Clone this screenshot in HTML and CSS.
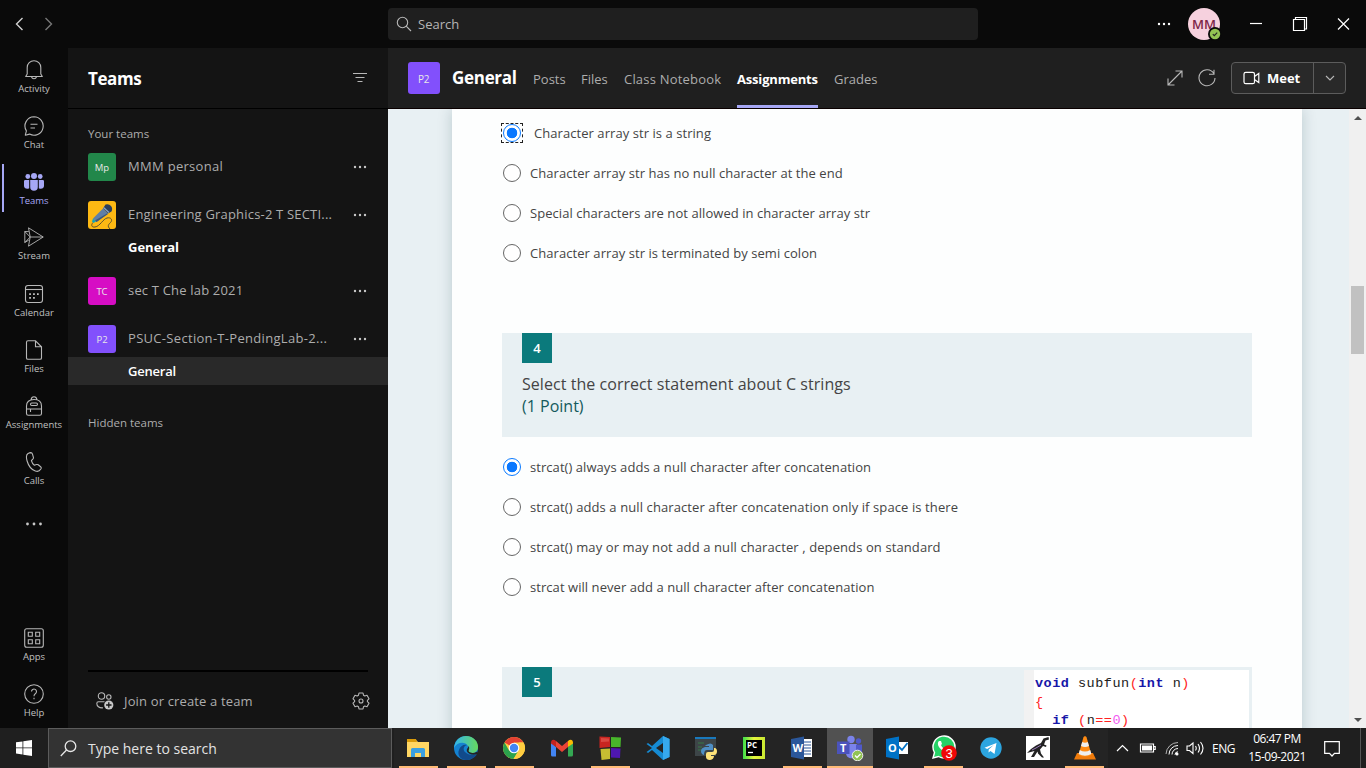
FILE: index.html
```html
<!DOCTYPE html>
<html lang="en">
<head>
<meta charset="utf-8">
<title>Microsoft Teams</title>
<link rel="stylesheet" href="styles.css">
</head>
<body>
<div class="desktop">
  <header class="titlebar">
    <div class="history">
      <svg class="ic" width="48" height="16" viewBox="0 0 48 16"><path d="M7.500 2 1.500 8l6 6" stroke="#d0d0d0" stroke-width="1.400"/><path d="m30.500 2 6 6-6 6" stroke="#777" stroke-width="1.400"/></svg>
    </div>
    <div class="searchbox">
      <svg class="ic" width="16" height="16" viewBox="0 0 16 16"><circle cx="6.500" cy="6.500" r="5.200"/><path d="m10.200 10.200 4.800 4.800"/></svg>
      <span class="t-search">Search</span>
    </div>
    <div class="window-tools">
      <svg class="dots white" width="14" height="4" viewBox="0 0 14 4"><circle cx="2" cy="2" r="1.200"/><circle cx="7" cy="2" r="1.200"/><circle cx="12" cy="2" r="1.200"/></svg>
      <div class="avatar"><span>MM</span>
        <svg class="presence" width="14" height="14" viewBox="0 0 14 14"><circle cx="7" cy="7" r="7" fill="#0a0a0a"/><circle cx="7" cy="7" r="5.200" fill="#92c353"/><path d="m4.800 7.200 1.500 1.500 2.900-3" fill="none" stroke="#222" stroke-width="1.100"/></svg>
      </div>
      <svg class="winbtns" width="102" height="16" viewBox="0 0 102 16" fill="none" stroke="#fff" stroke-width="1.200"><path d="M1 7.500h12"/><path d="M44.500 3.500h11v11h-11zM46.500 3.500v-2H57.500v11.500h-2"/><path d="m89 2.500 11 11m0-11-11 11"/></svg>
    </div>
  </header>

  <main class="workspace">
    <nav class="rail">
      <div class="rail-item"><svg class="ic" width="20" height="20" viewBox="0 0 20 20"><path d="M3.200 14V7.500a6.800 6.800 0 0 1 13.600 0V14l1.500 2.500H1.700z" stroke-linejoin="round"/><path d="M7.500 16.800a2.600 2.600 0 0 0 5 0"/></svg><span>Activity</span></div>
      <div class="rail-item"><svg class="ic" width="20" height="20" viewBox="0 0 20 20"><path d="M10 .8a9.200 9.200 0 1 1-4.400 17.300l-4.300 1.100 1.100-4.300A9.200 9.200 0 0 1 10 .8z" stroke-linejoin="round"/><path d="M6.500 8.200h7M6.500 12h4.500"/></svg><span>Chat</span></div>
      <div class="rail-item active"><svg width="20" height="20" viewBox="0 0 20 20" fill="#a6a7f5"><circle cx="10" cy="4" r="3"/><circle cx="3.800" cy="4.500" r="2.400"/><circle cx="16.200" cy="4.500" r="2.400"/><path d="M6.200 8h7.600v7a3.800 3.800 0 0 1-7.600 0zM0 9.200Q0 8 1.200 8h4v8.300C2.500 17.800 0 16 0 14zM20 9.200Q20 8 18.800 8h-4v8.300c2.700 1.500 5.200-.3 5.200-2.300z"/></svg><span>Teams</span></div>
      <div class="rail-item stream"><svg class="ic" width="20" height="20" viewBox="0 0 20 20"><path d="M4.500.8 19.200 10 4.500 19.200 6.200 10z M4.800 4.600.8 4.500v11l4-2.400M6.200 10h13M.8 4.500 6.200 10 .8 15.500" stroke-linejoin="round" stroke-width=".9"/></svg><span>Stream</span></div>
      <div class="rail-item"><svg class="ic" width="20" height="20" viewBox="0 0 20 20"><rect x="1.500" y="1.500" width="17" height="17" rx="2.500"/><path d="M1.500 5.500h17"/><g fill="#c8c8c8" stroke="none"><path d="M5.200 9.200h1.700v1.700H5.200zM9.100 9.200h1.700v1.700H9.100zM13 9.200h1.700v1.700H13zM5.200 13h1.700v1.700H5.200zM9.100 13h1.700v1.700H9.100z"/></g></svg><span>Calendar</span></div>
      <div class="rail-item"><svg class="ic" width="20" height="20" viewBox="0 0 20 20"><path d="M4 .8h7.500l6 6V18q0 1.300-1.500 1.300H4q-1.500 0-1.500-1.300V2.300Q2.500.8 4 .8zM11.500.8v6h6"/></svg><span>Files</span></div>
      <div class="rail-item"><svg class="ic" width="20" height="20" viewBox="0 0 20 20"><path d="M2.500 10C2.500 6 5 3.500 10 3.500S17.500 6 17.500 10v7.500q0 1.800-1.800 1.800H4.300q-1.800 0-1.800-1.800zM7 3.800Q7.500.8 10 .8t3 3M2.500 13h15M6.500 13v3"/><rect x="6.500" y="7" width="7" height="2.500" rx="1.200"/></svg><span>Assignments</span></div>
      <div class="rail-item"><svg class="ic" width="20" height="20" viewBox="0 0 20 20"><path d="M5.300.9 4 1.500C2.500 2.400 2.100 5.500 3.100 9c1.300 4.500 4.500 8.700 8.200 10 2.400.8 4.300.1 5.500-2l.3-.6q.4-1-.5-1.700l-2.400-1.900q-.8-.6-1.800-.2l-2 .7c-1.600-1.200-2.500-2.800-3-4.700l1.600-1.700q.6-.7.4-1.600l-.9-3.100Q8 .7 6.800.6z" stroke-linejoin="round"/></svg><span>Calls</span></div>
      <div class="rail-item more"><svg class="dots" width="18" height="4" viewBox="0 0 18 4"><circle cx="2.500" cy="2" r="1.400"/><circle cx="9" cy="2" r="1.400"/><circle cx="15.500" cy="2" r="1.400"/></svg></div>
      <div class="rail-bottom">
        <div class="rail-item"><svg class="ic" width="20" height="20" viewBox="0 0 20 20"><rect x=".7" y=".7" width="18.600" height="18.600" rx="2"/><path d="M4.300 4.300h4v4h-4zM11.700 4.300h4v4h-4zM4.300 11.700h4v4h-4zM11.700 11.700h4v4h-4z"/></svg><span>Apps</span></div>
        <div class="rail-item"><svg class="ic" width="20" height="20" viewBox="0 0 20 20"><circle cx="10" cy="10" r="9.300"/><path d="M7.500 7.600a2.500 2.500 0 1 1 3.800 2.100Q10 10.500 10 12.200M10 13.800v1.400"/></svg><span>Help</span></div>
      </div>
    </nav>

    <aside class="teams-panel">
      <div class="panel-head"><h1>Teams</h1>
        <svg class="ic" width="16" height="12" viewBox="0 0 16 12"><path d="M1 1.500h14M3.500 5.500h9M5.500 9.500h5"/></svg></div>
      <div class="panel-body">
        <div class="section-label">Your teams</div>
        <div class="team"><span class="tile green">Mp</span><span class="team-name n1">MMM personal</span><svg class="dots" width="14" height="4" viewBox="0 0 14 4"><circle cx="2" cy="2" r="1.200"/><circle cx="7" cy="2" r="1.200"/><circle cx="12" cy="2" r="1.200"/></svg></div>
        <div class="team"><svg class="tile-art" width="28" height="28" viewBox="0 0 28 28"><rect width="28" height="28" rx="3" fill="#fdb913"/><path d="M5 21.500c-2.500 3-1 5 2 4.500 5-.7 8-8 12-9 4-1 6 2 3.500 4.500-2 2-3.500 3.500-.5 6.500" fill="none" stroke="#5b5230" stroke-width="1"/><path d="m15 7.500 5 5L8.500 21 5 17.500z" fill="#5f7fa6"/><path d="m19 12.500 1 .5L8.500 21 7 19.500z" fill="#3c5878"/><path d="m5 17.500 3 3L5.500 22 4 20.500z" fill="#12a3b8"/><path d="M17.500 3.500q3.500-1 5.500 1.500t.5 5.500L20 12.500l-5-5z" fill="#2c3f5a"/><path d="m15.500 6.500 5.500 5" stroke="#86a5c9" stroke-width="1.300"/></svg><span class="team-name n2">Engineering Graphics-2 T SECTI...</span><svg class="dots" width="14" height="4" viewBox="0 0 14 4"><circle cx="2" cy="2" r="1.200"/><circle cx="7" cy="2" r="1.200"/><circle cx="12" cy="2" r="1.200"/></svg></div>
        <div class="channel unread"><span>General</span></div>
        <div class="team"><span class="tile pink">TC</span><span class="team-name n3">sec T Che lab 2021</span><svg class="dots" width="14" height="4" viewBox="0 0 14 4"><circle cx="2" cy="2" r="1.200"/><circle cx="7" cy="2" r="1.200"/><circle cx="12" cy="2" r="1.200"/></svg></div>
        <div class="team"><span class="tile purple">P2</span><span class="team-name n4">PSUC-Section-T-PendingLab-2...</span><svg class="dots" width="14" height="4" viewBox="0 0 14 4"><circle cx="2" cy="2" r="1.200"/><circle cx="7" cy="2" r="1.200"/><circle cx="12" cy="2" r="1.200"/></svg></div>
        <div class="channel selected"><span>General</span></div>
        <div class="section-label hidden-label">Hidden teams</div>
      </div>
      <div class="panel-foot">
        <svg class="ic" width="18" height="18" viewBox="0 0 18 18"><circle cx="5.500" cy="4" r="3.200"/><circle cx="12.800" cy="5" r="2.200"/><path d="M7 15.800C3 16.200.8 14 .8 11.500q0-1.700 1.700-1.700h6"/><circle cx="12.800" cy="13" r="4.600" fill="#c8c8c8" stroke="none"/><path d="M12.800 10.300v5.400M10.100 13h5.400" stroke="#141414" stroke-width="1.300"/></svg>
        <span class="t-join">Join or create a team</span>
        <svg class="ic gear" width="18" height="18" viewBox="0 0 18 18"><path d="m7 1-.5 2.200-1.300.8-2.200-.7-2 3.500L2.600 8.300v1.400L1 11.200l2 3.500 2.200-.7 1.300.8L7 17h4l.5-2.200 1.300-.8 2.200.7 2-3.500-1.600-1.500V8.300L17 6.800l-2-3.500-2.200.7-1.300-.8L11 1z" stroke-linejoin="round"/><circle cx="9" cy="9" r="2"/></svg>
      </div>
    </aside>

    <section class="channel-view">
      <div class="channel-head">
        <span class="tile purple big">P2</span>
        <h2>General</h2>
        <div class="tabs"><span class="tab tb1">Posts</span><span class="tab tb2">Files</span><span class="tab tb3">Class Notebook</span><span class="tab tb4 current">Assignments</span><span class="tab tb5">Grades</span></div>
        <div class="head-actions">
          <svg class="ic" width="16" height="16" viewBox="0 0 16 16"><path d="M1 15 15 1M8.500 1H15v6.500M1 8.500V15h6.500"/></svg>
          <svg class="ic" width="18" height="18" viewBox="0 0 18 18"><path d="M15.800 4.500A8 8 0 1 0 17 9M16 .8v4.500h-5"/></svg>
          <div class="meet"><span class="meet-main"><svg width="18" height="14" viewBox="0 0 18 14" fill="none" stroke="#fff" stroke-width="1.200"><rect x="1" y="1.300" width="10.500" height="11.400" rx="1.800"/><path d="m11.800 5.200 4-2.800v9.200l-4-2.800"/></svg><b>Meet</b></span><span class="meet-drop"><svg class="ic" width="10" height="6" viewBox="0 0 10 6"><path d="m1 1 4 4 4-4"/></svg></span></div>
        </div>
      </div>
      <div class="form-area">
        <div class="form-canvas">
          <div class="form-card">
            <div class="options first">
              <div class="option focused"><i class="radio on"></i><span class="o1">Character array str is a string</span></div>
              <div class="option"><i class="radio"></i><span class="o2">Character array str has no null character at the end</span></div>
              <div class="option"><i class="radio"></i><span class="o3">Special characters are not allowed in character array str</span></div>
              <div class="option"><i class="radio"></i><span class="o4">Character array str is terminated by semi colon</span></div>
            </div>
            <div class="question"><span class="qnum">4</span>
              <p class="qtext">Select the correct statement about C strings</p><p class="points">(1 Point)</p></div>
            <div class="options">
              <div class="option"><i class="radio on"></i><span class="o5">strcat() always adds a null character after concatenation</span></div>
              <div class="option"><i class="radio"></i><span class="o6">strcat() adds a null character after concatenation only if space is there</span></div>
              <div class="option"><i class="radio"></i><span class="o7">strcat() may or may not add a null character , depends on standard</span></div>
              <div class="option"><i class="radio"></i><span class="o8">strcat will never add a null character after concatenation</span></div>
            </div>
            <div class="question last"><span class="qnum">5</span>
              <pre class="code"><b>void</b> subfun<em>(</em><b>int</b> n<em>)</em>
<em>{</em>
  <b>if</b> <em>(</em>n<em>==</em><u>0</u><em>)</em></pre></div>
          </div>
        </div>
        <div class="scrollbar"><i class="arrow up"></i><i class="thumb"></i><i class="arrow down"></i></div>
      </div>
    </section>
  </main>

  <footer class="taskbar">
    <div class="start"><svg width="16" height="16" viewBox="0 0 16 16" fill="#fff"><path d="M0 2.300 6.500 1.400v6.100H0zM7.300 1.300 16 0v7.500H7.300zM0 8.300h6.500v6.200L0 13.600zM7.300 8.300H16V16l-8.700-1.300z"/></svg></div>
    <div class="winsearch"><svg width="17" height="17" viewBox="0 0 17 17" fill="none" stroke="#e6e6e6" stroke-width="1.300"><circle cx="10.500" cy="6.200" r="5.300"/><path d="M6.500 10 .8 16"/></svg><span class="t-type">Type here to search</span></div>
    <div class="apps">
      <div class="app run"><svg width="24" height="24" viewBox="0 0 24 24"><path d="M1 4h9l2 2h11v15H1z" fill="#ffd663"/><path d="M1 3h9l1 3H1z" fill="#d99b0b"/><path d="M5 21v-7.500Q5 12 6.500 12h11q1.500 0 1.500 1.500V21h-4v-4H9v4z" fill="#3a9fe0"/></svg></div>
      <div class="app run"><svg width="26" height="26" viewBox="0 0 26 26"><defs><linearGradient id="eg" x1="0" x2="1"><stop offset="0" stop-color="#32b5ee"/><stop offset="1" stop-color="#67d85c"/></linearGradient></defs><circle cx="13" cy="13" r="12" fill="#1482d0"/><path d="M24 19c-2 4-7 6-11 6-6 0-9-6-7-10 1-4 5-6 8-5-4 1-4 5-2 7 3 3 8 4 12 2z" fill="#114a8b"/><path d="M1 13C2 5 7 1 13 1c8 0 12 6 12 11 0 4-3 6-6 6s-5-1-4-3c1-1 1-3 0-4-3-5-11-4-14 2z" fill="url(#eg)"/><path d="M15.500 11q1.500 2 .2 4.300-.7 2.200 3.800 2.700 2.500 0 4-1.200l1.500 1.700q-5 2.500-9 0-3-2-2-4.500 1-1 1.500-3z" fill="#242424"/></svg></div>
      <div class="app run"><svg width="24" height="24" viewBox="0 0 24 24"><circle cx="12" cy="12" r="11" fill="#ffcd40"/><path d="M12 12 2.500 6.500A11 11 0 0 1 21.500 6.500H12z" fill="#e34133"/><path d="M12 12 7.200 14.700 2.500 6.500a11 11 0 0 0 9 16.500l5-8.500z" fill="#2ba24c"/><path d="M11.500 23 16.800 14.700V6.500h4.700A11 11 0 0 1 11.500 23z" fill="#ffcd40"/><circle cx="12" cy="12" r="5.300" fill="#fff"/><circle cx="12" cy="12" r="4.200" fill="#4285f4"/></svg></div>
      <div class="app"><svg width="24" height="20" viewBox="0 0 24 20"><path d="M1 4v13q0 1.500 1.500 1.500H6V9z" fill="#4285f4"/><path d="M23 4v13q0 1.500-1.500 1.500H18V9z" fill="#34a853"/><path d="m6 3 6 5 6-5v6l-6 5-6-5z" fill="#ea4335"/><path d="M1 5c0-4 3-4 5-2v6L1 5.500z" fill="#c5221f"/><path d="M23 5c0-4-3-4-5-2v6l5-3.500z" fill="#fbbc04"/></svg></div>
      <div class="app run"><svg width="24" height="24" viewBox="0 0 24 24"><path d="m1.500.500 10.500.5v10L1.500 12z" fill="#c92520"/><path d="m13 1 10 .5-.5 9.500H13z" fill="#48b62b"/><path d="m2.500 13 9.500-.5v10.500L3.500 24z" fill="#c6bd32"/><path d="m13 12 9.500.5-.5 9.500-9-.5z" fill="#4e17b0"/><path d="m3 2 8 .5v3L3 6z" fill="#e66058" opacity=".6"/></svg></div>
      <div class="app"><svg width="24" height="24" viewBox="0 0 24 24"><path d="m17 0 6.500 3v18L17 24 6 14l-4 3-1.500-1L6 12 .5 8 2 7l4 3z" fill="#168bd3"/><path d="M17 7v10l-7-5z" fill="#242424"/><path d="m17 0 6.500 3v18L17 24z" fill="#36a9ee"/></svg></div>
      <div class="app"><svg width="24" height="24" viewBox="0 0 24 24"><path d="M1 2h21v18H1z" fill="#3d4548"/><path d="M1 1h21v2H1z" fill="#1979bd"/><path d="M4 7h6M4 11h4M4 14h5" stroke="#397a47"/><path d="M12 9q5-3 7 0v5h-6q-3 0-3 5-3-1-3-4t4-4h4v-1h-4z" fill="#4f8fc4"/><path d="M20 12c4-1 4 7 0 7h-3v1h3c0 5-8 5-8 1v-3q0-2 2-2h4q2 0 2-2z" fill="#ffe379"/></svg></div>
      <div class="app"><svg width="22" height="22" viewBox="0 0 22 22"><defs><linearGradient id="pg" x1="0" x2="1"><stop offset="0" stop-color="#3de04a"/><stop offset=".5" stop-color="#e8f53c"/><stop offset="1" stop-color="#c8e832"/></linearGradient></defs><path d="M0 0h22v22H0z" fill="url(#pg)"/><path d="M3 3h16v16H3z"/><text x="4" y="11" class="pc-txt">PC</text><path d="M5 15.500h5" stroke="#fff" stroke-width="1.300"/></svg></div>
      <div class="app run"><svg width="24" height="24" viewBox="0 0 24 24"><path d="M13 3h9v18h-9z" fill="#fff"/><path d="M14 6h7M14 9h7M14 12h7M14 15h7M14 18h7" stroke="#2b579a"/><path d="m1 3 13-2.500v23L1 21z" fill="#2b579a"/><text x="2.500" y="16" class="logo-txt">W</text></svg></div>
      <div class="app teams-app run"><svg width="28" height="26" viewBox="0 0 28 26"><circle cx="15" cy="4.500" r="3.700" fill="#7b83eb"/><circle cx="22.500" cy="6" r="2.700" fill="#5059c9"/><path d="M10 9h11v9c0 7-11 7-11 0z" fill="#7b83eb"/><path d="M20 9.500h6v7q-1 5-6 3z" fill="#5059c9"/><path d="M1 6.500h12.500V19H1z" fill="#4b53bc"/><text x="4" y="16.500" class="logo-txt">T</text><circle cx="21.500" cy="20.500" r="5.300" fill="#92c353" stroke="#eee"/><path d="m19 20.500 2 2 3.500-3.500" fill="none" stroke="#fff" stroke-width="1.300"/></svg></div>
      <div class="app narrow"><svg width="24" height="24" viewBox="0 0 24 24"><path d="M12 6h11v12H12z" fill="#fff"/><path d="m13.500 10.500 3.500 3.500 5.500-7" stroke="#0072c6" fill="none" stroke-width="1.800"/><path d="m1 3 13-2.500v23L1 21z" fill="#0072c6"/><text x="3" y="16" class="logo-txt">O</text></svg></div>
      <div class="app narrow run"><svg width="26" height="26" viewBox="0 0 26 26"><path d="M2 23 3.500 17.500A11 11 0 1 1 7.500 21.500z" fill="#25d366" stroke="#fff" stroke-width="1.400"/><path d="M8 6c-4 4 4 12 9 11l1-2-3-2-1 1c-2-.5-3-2-4-4l1-1-1-3z" fill="#fff"/><circle cx="18" cy="18" r="7.800" fill="#f00707"/><text x="14.500" y="22.500" class="badge-txt">3</text></svg></div>
      <div class="app narrow"><svg width="22" height="22" viewBox="0 0 22 22"><circle cx="11" cy="11" r="10.700" fill="#2ca5e0"/><path d="m4.500 10.700 12-4.700-2 11-4-3-2 1.500.2-3 5-4.500-6.500 4z" fill="#fff"/></svg></div>
      <div class="app narrow"><svg width="24" height="24" viewBox="0 0 24 24"><path d="M0 0h24v24H0z" fill="#fff"/><path d="m1 17 4-4 5-3.500 5-2.500 2.500-4.500L22.500 1l.5 2.500-3.500 1-1.500 4 2.500 1-.5 1.500-3-1-3 3.500 1 4 3 4h-2l-4-4-.5-2-3.500 5.500H5L8.500 15z" fill="#222"/><path d="m6 14 4-2 5-3" fill="none" stroke="#9a7bbb"/></svg></div>
      <div class="app narrow run"><svg width="22" height="24" viewBox="0 0 22 24"><path d="M3 17h16l3 6.500H0z" fill="#f07b0b"/><path d="m11 0 1.500 1L17.500 19q-6.500 3-13 0L9.500 1z" fill="#ff8b13"/><path d="M8.200 6 7 10q4 2 8 0l-1.200-4q-2.800 1.500-5.600 0zM5.800 14l-1.200 4q6.400 3.500 12.800 0l-1.200-4q-5.200 3-10.400 0z" fill="#eee"/></svg></div>
    </div>
    <div class="tray">
      <svg width="92" height="18" viewBox="0 0 92 18" fill="none" stroke="#fff" stroke-width="1.200"><path d="m3 12 5.500-5.500L14 12"/><path d="M26.500 5h13v8h-13zM40 7.500h1.200v3H40"/><path d="M28 6.500h10v5H28z" fill="#fff" stroke="none"/><g stroke-width="1"><path d="M52 15A12 12 0 0 1 64 3.500" opacity=".65"/><path d="M55 15.500a9 9 0 0 1 9-9"/><path d="M58 15.500a6 6 0 0 1 6-6M61 15.800a3 3 0 0 1 3-3"/></g><circle cx="63" cy="15" r="1.500" fill="#fff" stroke="none"/><path d="M73 7h2.500L79 4v10.500L75.500 11.500H73zM81.500 7q1.500 2.200 0 4.500M84 5q3 4.200 0 8.500M86.500 3q5 6.200 0 12.500" stroke-width="1.100"/></svg>
      <span class="lang">ENG</span>
      <div class="clock"><span class="ck1">06:47 PM</span><span class="ck2">15-09-2021</span></div>
      <svg class="note" width="16" height="16" viewBox="0 0 16 16" fill="none" stroke="#fff" stroke-width="1.200"><path d="M.7.700h14.600v11.600h-4.800L8 15l-2.500-2.700H.7z"/></svg>
      <i class="peek"></i>
    </div>
  </footer>
</div>
</body>
</html>
```

FILE: styles.css
```css
* { box-sizing: border-box; }
body { margin: 0; font-family: "Open Sans", "Noto Sans", sans-serif; font-size: 13px; color: #adadad; background: #0a0a0a; }
h1, h2, p, pre { margin: 0; }
svg { display: block; flex: none; }
span { white-space: nowrap; }
.ic { fill: none; stroke: #b8b8b8; stroke-width: 1.1; }
.dots { fill: #c8c8c8; }
.dots.white { fill: #fff; }
.desktop { width: 1366px; height: 768px; display: flex; flex-direction: column; overflow: hidden; }

.titlebar { height: 48px; display: flex; align-items: center; flex: none; background: #0a0a0a; }
.history { width: 388px; padding-left: 15px; }
.searchbox { width: 590px; height: 32px; background: #1f1f1f; border-radius: 4px; display: flex; align-items: center; gap: 6px; padding-left: 8px; color: #b5b5b5; }
.window-tools { flex: 1; display: flex; align-items: center; padding-left: 179px; }
.avatar { position: relative; width: 32px; height: 32px; border-radius: 50%; margin-left: 17px; background: #f6d1de; color: #7d2748; display: flex; align-items: center; justify-content: center; font-size: 13px; font-weight: 600; }
.presence { position: absolute; right: -2px; bottom: -1px; }
.winbtns { margin-left: 29px; }

.workspace { height: 680px; display: flex; flex: none; }
.rail { width: 68px; padding-top: 4px; display: flex; flex-direction: column; gap: 8px; background: #0a0a0a; }
.rail-item { height: 48px; flex: none; display: flex; flex-direction: column; align-items: center; padding-top: 8px; font-size: 9.5px; line-height: 14px; color: #c0c0c0; gap: 2px; }
.rail-item.stream { padding-top: 7px; }
.rail-item.active { position: relative; color: #a6a7f5; }
.rail-item.active::before { content: ""; position: absolute; left: 2px; top: 0; width: 2px; height: 48px; background: #a6a7f5; }
.rail-item.more { padding-top: 22px; }
.rail-bottom { margin-top: auto; padding-bottom: 4px; display: flex; flex-direction: column; gap: 8px; }

.teams-panel { width: 320px; background: #141414; display: flex; flex-direction: column; }
.panel-head { height: 61px; flex: none; border-bottom: 1px solid #000; display: flex; align-items: center; justify-content: space-between; padding: 0 20px; }
.panel-head h1 { font-size: 17px; line-height: 24px; margin-top: 2px; font-weight: 700; color: #fff; letter-spacing: -.4px; }
.panel-body { flex: 1; padding-top: 15px; }
.section-label { height: 19px; line-height: 20px; padding-left: 20px; font-size: 11.5px; }
.hidden-label { margin-top: 28px; }
.team { height: 48px; display: flex; align-items: center; padding: 0 21px 0 20px; }
.team-name { flex: 1; margin-left: 12px; padding-bottom: 2px; }
.n1 { letter-spacing: .3px; } .n2 { letter-spacing: .19px; } .n3 { letter-spacing: .18px; } .n4 { letter-spacing: .31px; }
.tile { width: 28px; height: 28px; border-radius: 3px; display: flex; align-items: center; justify-content: center; color: #e8e8e8; font-size: 9.5px; padding-top: 1px; flex: none; }
.green { background: #22874a; }
.pink { background: #d60dc4; }
.purple { background: #8250fc; }
.tile.big { width: 32px; height: 32px; font-size: 10px; letter-spacing: -.4px; padding-right: 1px; }
.channel { height: 28px; display: flex; align-items: center; padding-left: 60px; color: #fff; }
.channel.unread { font-weight: 700; margin-top: -6px; margin-bottom: 6px; }
.channel.selected { background: #292929; font-weight: 600; margin-top: -6px; letter-spacing: -.2px; }
.panel-foot { height: 58px; flex: none; margin: 0 20px; border-top: 2px solid #000; display: flex; align-items: center; padding: 2px 0 0 8px; }
.t-join { margin-left: 10px; flex: 1; letter-spacing: .15px; padding-bottom: 1px; }
.gear { margin-right: -2px; }

.channel-view { width: 978px; display: flex; flex-direction: column; }
.channel-head { height: 61px; flex: none; display: flex; align-items: center; background: #1f1f1f; border-bottom: 1px solid #0a0000; padding: 0 20px; }
.channel-head h2 { margin: 0 16px 0 12px; width: 65px; font-size: 17px; line-height: 24px; color: #fff; letter-spacing: -.3px; }
.tabs { display: flex; gap: 16px; height: 60px; line-height: 62px; }
.tb1 { width: 32px; } .tb2 { width: 27px; } .tb3 { width: 97px; letter-spacing: .2px; } .tb4 { width: 81px; letter-spacing: -.18px; } .tb5 { width: 44px; }
.tab.current { color: #fff; font-weight: 700; border-bottom: 3px solid #a6a7f5; }
.head-actions { margin-left: auto; display: flex; align-items: center; gap: 15px; }
.meet { display: flex; height: 32px; width: 115px; border: 1px solid #5c5c5c; border-radius: 4px; background: #292929; color: #fff; }
.meet-main { width: 82px; display: flex; align-items: center; gap: 6px; padding-left: 11px; border-right: 1px solid #5c5c5c; }
.meet-drop { flex: 1; display: flex; align-items: center; justify-content: center; }

.form-area { height: 619px; display: flex; }
.form-canvas { width: 961px; padding-left: 64px; background: #e8f0f3; overflow: hidden; }
.form-card { width: 850px; height: 640px; padding: 4px 50px 0; background: #fdfefe; box-shadow: 0 0 14px rgba(0, 50, 60, .2); }
.option { height: 40px; display: flex; align-items: center; gap: 9px; color: #444; padding-left: 1px; letter-spacing: .06px; }
.o6, .o7 { letter-spacing: .1px; }
.radio { width: 18px; height: 18px; border: 1px solid #666; border-radius: 50%; background: #fff; flex: none; }
.radio.on { border: 1px solid #0a7aff; background: radial-gradient(circle, #0a78ff 0 5px, #fff 5.600px); }
.focused .radio { position: relative; }
.focused .radio::after { content: ""; position: absolute; inset: -2px -3px; border: 1px dashed #222; }
.focused span { margin-left: 4px; }
.question { height: 104px; margin: 60px 0 10px; padding-left: 20px; background: #e8f0f3; }
.qnum { display: block; width: 30px; height: 30px; line-height: 30px; text-align: center; background: #0b7a7c; color: #fff; font-weight: 600; }
.qtext, .points { font-size: 16px; line-height: 22px; color: #444; }
.qtext { margin-top: 10px; letter-spacing: .05px; }
.points { color: #145a5c; }
.question.last { display: flex; justify-content: space-between; padding-right: 3px; margin-bottom: 0; }
.code { width: 225px; height: 100px; margin-top: 3px; padding: 5px 0 0 11px; background: linear-gradient(90deg, #f2f2f2 10px, #fff 10px); font: 13.500px/18.500px "Liberation Mono", monospace; color: #222; letter-spacing: .5px; }
.code b { color: #1717a8; }
.code em { color: #f22; font-style: normal; }
.code u { color: #f25af2; text-decoration: none; }
.scrollbar { width: 17px; background: #f0f0f0; display: flex; flex-direction: column; align-items: center; padding: 7px 0 6px; }
.thumb { width: 13px; height: 68px; background: #c1c1c1; margin: 166px 0 auto; }
.arrow { border: 4px solid transparent; width: 0; height: 0; }
.arrow.up { border-top: 0; border-bottom-color: #505050; }
.arrow.down { border-bottom: 0; border-top-color: #505050; }

.taskbar { height: 40px; flex: none; display: flex; background: #1f1f1f; color: #fff; }
.start { width: 48px; display: flex; align-items: center; justify-content: center; }
.winsearch { width: 344px; border: 1px solid #5c5c5c; background: #333; display: flex; align-items: center; gap: 11px; padding-left: 11px; color: #e3e3e3; font-size: 14px; }
.apps { margin-left: 2px; display: flex; background: #242424; }
.app { width: 48px; display: flex; align-items: center; justify-content: center; }
.app.narrow { width: 47px; }
.app.run { background: linear-gradient(#fb7, #fb7) center bottom / 39px 2px no-repeat; }
.app.teams-app { width: 46px; margin: 0 0 0 1px; background: linear-gradient(#fb7, #fb7) center bottom / 46px 2px no-repeat #515151; }
.logo-txt { font: bold 11px "Open Sans", sans-serif; fill: #fff; }
.pc-txt { font: bold 8px "Open Sans", sans-serif; fill: #fff; }
.badge-txt { font: 13px "Liberation Sans", sans-serif; fill: #fff; }
.tray { flex: 1; display: flex; align-items: center; padding-left: 6px; font-size: 12px; }
.lang { width: 24px; margin-left: 6px; letter-spacing: -.5px; }
.clock { width: 60px; margin-left: 11px; display: flex; flex-direction: column; align-items: center; line-height: 18px; letter-spacing: -.5px; }
.note { margin-left: 17px; margin-top: 2px; }
.peek { width: 1px; height: 40px; margin-left: 20px; background: #555; }
```
